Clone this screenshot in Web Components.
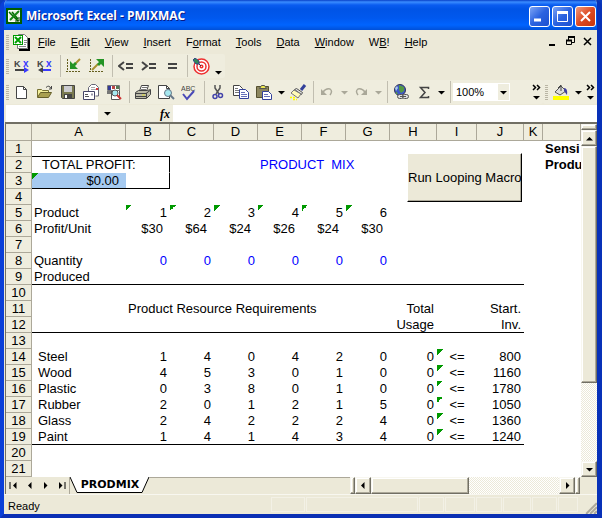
<!DOCTYPE html>
<html lang="en">
<head>
<meta charset="utf-8">
<title>Microsoft Excel - PMIXMAC</title>
<style>
  html, body { height: 100%; margin: 0; }
  body {
    --face: #ece9d8;
    --bar: #efedde;
    --shadow: #aca899;
    --dark: #716f64;
    --ui: "Liberation Sans", Arial, sans-serif;
    background: #0a3bbd;
    font: 11px/16px var(--ui);
    color: #000;
  }
</style>
</head>
<body>
<excel-window>
  <title-bar slot="title">Microsoft Excel - PMIXMAC</title-bar>
  <menu-bar slot="bars"></menu-bar>
  <tool-bar slot="bars" items="kx-right kx-left | axis-in axis-out | le ge eq | target drop-low"></tool-bar>
  <tool-strip slot="bars">
    <tool-bar grow items="new open save mail search | print preview spell | cut copy paste drop brush | undo drop-off redo drop-off | globe sigma drop |">
      <zoom-box></zoom-box>
    </tool-bar>
    <tool-bar items="bucket drop"></tool-bar>
  </tool-strip>
  <formula-bar slot="bars"></formula-bar>
  <work-sheet>
    <macro-button>Run Looping Macro</macro-button>
  </work-sheet>
  <sheet-tabs slot="foot">PRODMIX</sheet-tabs>
  <status-bar slot="foot">Ready</status-bar>
</excel-window>

<script>
const KX = '<g font-family="Liberation Sans" font-weight="bold"><text x="0" y="9" font-size="9" fill="#444">K</text><text x="9" y="9" font-size="10" fill="#3a3aff">x</text></g>';

const ICONS = {
  "excel": '<rect width="16" height="16" fill="#005c00"/><path d="M2.5 2.5h11v11h-11z" fill="#e9f3e0" stroke="#fff"/><path d="M3 4l9 9M6 4l6 7" stroke="#006c00" stroke-width="1.500"/><path d="M13 3L4 12" stroke="#168516" stroke-width="2"/><path d="M9 13h4V9" fill="none" stroke="#003c00"/>',
  "book": '<path d="M6 16h10V4" fill="none" stroke="#000" stroke-width="2"/><path d="M4.500 2.500l1-2h6l3 3v11h-10z" fill="#fff" stroke="#777"/><path d="M11 6.500h3M11 8.500h3M6 12.500h7M11 10.500h2" stroke="#888"/><rect x=".5" y="1.500" width="9" height="9" fill="#fff" stroke="#009900"/><path d="M2 3l6 6M8 3L2 9" stroke="#00a000" stroke-width="2"/>',
  "kx-right": KX + '<path d="M1 12h9" stroke="#444" stroke-width="2"/><path d="M10 9v6l5-3z" fill="#3a3aff"/>',
  "kx-left": KX + '<path d="M6 12h8" stroke="#3a3aff" stroke-width="2"/><path d="M6 9v6l-5-3z" fill="#444"/>',
  "axis-in": '<path d="M1.500 1v13M0 13.500h15" stroke="#665f20" stroke-dasharray="2 1"/><path d="M14 1L8 7" stroke="#a89030" stroke-width="2"/><path d="M4 3v8h8l-3-3 2-2-2-2-2 2z" fill="#249424"/>',
  "axis-out": '<path d="M1.500 1v13M0 13.500h15" stroke="#665f20" stroke-dasharray="2 1"/><path d="M3 12L9 6" stroke="#a89030" stroke-width="2"/><path d="M7 1h8v8l-3-3-2 2-2-2 2-2z" fill="#249424"/>',
  "le": '<path d="M6 4L1 8l5 4M8 6h7M8 10h7" fill="none" stroke="#444" stroke-width="2"/>',
  "ge": '<path d="M1 4l5 4-5 4M8 6h7M8 10h7" fill="none" stroke="#444" stroke-width="2"/>',
  "eq": '<path d="M4 6h9M4 10h9" stroke="#444" stroke-width="2"/>',
  "target": '<g fill="#fff" stroke="#ee3030" stroke-width="1.500"><circle cx="8.500" cy="8.500" r="7.500"/><circle cx="8.500" cy="8.500" r="4.500"/><circle cx="8.500" cy="8.500" r="1.300"/></g><path d="M1 1l7 7" stroke="#334"/><path d="M0 2l2-2 4 3v3H3z" fill="#338855" stroke="#334488"/>',
  "new": '<path d="M2.500 2.500h7l3 3v9h-10z" fill="#fff" stroke="#444"/><path d="M9.500 2.500v3h3" fill="none" stroke="#444"/>',
  "open": '<path d="M.5 13V5.500h4l1 1h6V9" fill="#f3ef9a" stroke="#777133"/><path d="M.5 13.500l3-5h11l-3 5z" fill="#aaa050" stroke="#66602a"/><path d="M9 3.500q3-3 5 1M14.500 2v3H12" fill="none" stroke="#444"/>',
  "save": '<path d="M1.500 1.500h13v13h-12l-1-1z" fill="#7a7a50" stroke="#444"/><rect x="4" y="2" width="8" height="6" fill="#ccccd0"/><path d="M4 10h8v5H4z" fill="#444"/><path d="M5 11h2v3H5z" fill="#fff"/>',
  "mail": '<path d="M5.500 8V3.500l3-3h4l3 3V12h-3" fill="#fff" stroke="#667"/><path d="M8 3.500h4M8 5.500h5" stroke="#aaa"/><rect x="13" y="4" width="2" height="2" fill="#d33"/><path d="M.5 7.500h11v8H.5z" fill="#fff" stroke="#446"/><path d="M2 10.500h3M2 12.500h4" stroke="#555"/><path d="M8 9.500h2v2H8z" fill="#99a"/>',
  "search": '<path d="M5.500 4.500h8v11h-8z" fill="#fff" stroke="#555"/><path d="M1.500 1.500h12v5h-12z" fill="#fff" stroke="#777"/><path d="M2 2h3v4H2z" fill="#333a99"/><path d="M6 2h3v3H6z" fill="#b44"/><path d="M1 7h4v3H1z" fill="#777"/><path d="M10 2h3v3h-3z" fill="#557755"/><circle cx="9" cy="9" r="3" fill="#a6e8f0" stroke="#555"/><path d="M11 11l4 4" stroke="#c33" stroke-width="2"/>',
  "print": '<path d="M4.500 7l2-5.500h7L11.500 7z" fill="#fff" stroke="#444"/><path d="M7 3.500h5M6 5.500h5" stroke="#777"/><path d="M.5 8.500l3-2h9l3-1v5l-4 4H.5z" fill="#bbb9a8" stroke="#444"/><path d="M1 9.500h10l4-3M1 12.500h10M11.500 9v5" fill="none" stroke="#444"/><path d="M7 11h3" stroke="#dd3"/>',
  "preview": '<path d="M.5 1.500h8l3 3v10H.5z" fill="#fff" stroke="#444"/><path d="M8.500 1.500v3h3" fill="none" stroke="#444"/><circle cx="10" cy="9" r="3.500" fill="#a6e8f0" stroke="#667788"/><path d="M12 11l4 4" stroke="#667788" stroke-width="2"/>',
  "spell": '<text x="0" y="7" font-family="Liberation Sans" font-size="7" fill="#444">ABC</text><path d="M2 10l4 5 7-8" fill="none" stroke="#4a4ab8" stroke-width="2"/>',
  "cut": '<path d="M5 1v3l4 6M10 1v3l-4 6" fill="none" stroke="#555" stroke-width="1.500"/><circle cx="5" cy="12.500" r="2" fill="none" stroke="#44a" stroke-width="1.500"/><circle cx="10.500" cy="11.500" r="2" fill="none" stroke="#44a" stroke-width="1.500"/>',
  "copy": '<path d="M.5 1.500h6l3 3v7h-9z" fill="#fff" stroke="#444"/><path d="M2 4.500h3M2 6.500h5M2 8.500h5" stroke="#777"/><path d="M6.500 5.500h6l3 3v6h-9z" fill="#fff" stroke="#33419a"/><path d="M8 8.500h4M8 10.500h6M8 12.500h6" stroke="#6670b8"/>',
  "paste": '<path d="M.5 2.500h12v11H.5z" fill="#8d875f" stroke="#555030"/><path d="M3.500 4.500l2-3h3l2 3z" fill="#eeea50" stroke="#555"/><path d="M6.500 7.500h6l3 3v5h-9z" fill="#fff" stroke="#33419a"/><path d="M8 10.500h4M8 12.500h6" stroke="#6670b8"/>',
  "brush": '<path d="M11 6l4-5" stroke="#33419a" stroke-width="3"/><path d="M6.500 4.500l6 4-1 2-7-5z" fill="#ddd" stroke="#555"/><path d="M4 6L1 9l7 5 3-4z" fill="#fffbb8" stroke="#777"/><path d="M0 13.500h5M3 15.500h4" stroke="#ff0" stroke-width="1.500" stroke-dasharray="2 1"/>',
  "undo": '<path d="M4 8q3-4 7-3 3 2 0 6" fill="none" stroke="#aaa899" stroke-width="1.500"/><path d="M2 5v6h6z" fill="#aaa899"/>',
  "redo": '<path d="M12 8Q9 4 5 5q-3 2 0 6" fill="none" stroke="#aaa899" stroke-width="1.500"/><path d="M14 5v6H8z" fill="#aaa899"/>',
  "globe": '<circle cx="7" cy="6" r="5.500" fill="#3e58c8" stroke="#335"/><path d="M6 1l5 2v4L8 9 6 6zM3 7l2 3H3z" fill="#559944"/><path d="M2 4l2-2 1 2-2 3z" fill="#aaccee"/><g fill="#ddd" stroke="#555"><rect x="4.500" y="10.500" width="6" height="4" rx="2"/><rect x="9.500" y="10.500" width="6" height="4" rx="2"/></g><path d="M7 12.500h6" stroke="#555"/>',
  "sigma": '<path d="M12.500 5V3.500h-8L9 8.500l-4.500 5h8V12" fill="none" stroke="#444" stroke-width="1.500"/>',
  "bucket": '<path d="M2 8l6-6 5 5-6 4z" fill="#ddd" stroke="#555"/><path d="M8 7V1L5 4" fill="none" stroke="#444"/><path d="M11 4q4 0 3 7l-3-4z" fill="#4040a0"/><path d="M0 12h16v4H0z" fill="#ff0"/>',
};

const MENUS = ["_File", "_Edit", "_View", "_Insert", "F_ormat", "_Tools", "_Data", "_Window", "W_B!", "_Help"];

/** Builds an inline 17px icon. */
function icon(name) {
  return `<svg width="17" height="17" viewBox="0 0 17 17" aria-hidden="true">${ICONS[name]}</svg>`;
}

/** Small filled arrow used by drop-downs and scroll buttons. */
function arrow(dir, color = "#000") {
  const shapes = {
    down: "M0 2h7L3.500 5.500z",
    up: "M0 5.500h7L3.500 2z",
    left: "M5.500 0v7L2 3.500z",
    right: "M2 0v7l3.500-3.500z",
  };
  return `<svg width="7" height="7" viewBox="0 0 7 7" aria-hidden="true"><path d="${shapes[dir]}" fill="${color}"/></svg>`;
}

const RESET = `
  *, *::before { box-sizing: border-box; }
  button { margin: 0; padding: 0; border: 0; background: none; font: inherit; color: inherit; }
  svg { display: block; flex: none; }
`;

class BaseElement extends HTMLElement {
  constructor() {
    super();
    this.attachShadow({ mode: "open" });
  }

  connectedCallback() {
    this.shadowRoot.innerHTML = `<style>${RESET}${this.styles()}</style>${this.markup()}`;
  }
}

class ExcelWindow extends BaseElement {
  styles() {
    return `
      :host {
        display: flex; flex-direction: column; height: 100%; box-sizing: border-box;
        border: solid; border-width: 0 5px 4px 4px;
        border-color: #0a4be0 #0831b8 #0a2fb4 #0a3fd8;
        border-radius: 7px 7px 0 0; overflow: hidden; background: var(--face);
      }
      main { flex: 1; min-height: 0; display: flex; }
    `;
  }

  markup() {
    return `<slot name="title"></slot><slot name="bars"></slot><main><slot></slot></main><slot name="foot"></slot>`;
  }
}

class TitleBar extends BaseElement {
  styles() {
    return `
      :host {
        display: flex; align-items: center; gap: 3px; height: 30px; flex: none;
        box-sizing: border-box; padding: 2px 1px 0 2px;
        background: linear-gradient(#0840c8 0, #3a8cff 2px, #0a5cf0 5px, #0054e6 9px, #0058ee 18px, #0064ff 25px, #0050d8 30px);
        color: #fff; font: bold 12px/20px "Open Sans", sans-serif; text-shadow: 1px 1px #0a1883;
      }
      h1 { flex: 1; margin: 0; font: inherit; white-space: nowrap; }
      div { display: flex; gap: 2px; }
      button {
        width: 21px; height: 21px; border: 1px solid #fff; border-radius: 3px;
        background: linear-gradient(135deg, #7da4f5, #2a62e0 50%, #1c50d0);
      }
      .close { background: linear-gradient(135deg, #f0997c, #dd4a22 50%, #c8350c); }
      button svg { margin: auto; }
    `;
  }

  markup() {
    return `
      ${icon("excel")}
      <h1><slot></slot></h1>
      <div>
        <button aria-label="Minimize"><svg width="13" height="13"><path d="M1 10h7" stroke="#fff" stroke-width="3"/></svg></button>
        <button aria-label="Maximize"><svg width="13" height="13"><path d="M1.500 2h10v9.500h-10z" fill="none" stroke="#fff"/><path d="M1 2.500h11" stroke="#fff" stroke-width="3"/></svg></button>
        <button class="close" aria-label="Close"><svg width="13" height="13"><path d="M2 2l9 9M11 2l-9 9" stroke="#fff" stroke-width="2"/></svg></button>
      </div>
    `;
  }
}

const GRIP = `
  .grip {
    width: 3px; height: 15px; flex: none; margin: 0 1px;
    background: repeating-linear-gradient(#b9b5a4 0 1px, transparent 1px 2px);
  }
`;

class MenuBar extends BaseElement {
  styles() {
    return `
      ${GRIP}
      :host { display: flex; align-items: center; height: 24px; flex: none; padding: 0 4px 0 1px; }
      nav { flex: 1; display: flex; }
      nav button { padding: 0 7px 0 8px; white-space: nowrap; }
      .book { margin-left: 3px; }
      .mdi { display: flex; gap: 6px; padding-bottom: 2px; }
    `;
  }

  markup() {
    const items = MENUS.map((name) => `<button>${name.replace(/_(.)/, "<u>$1</u>")}</button>`);
    return `
      <span class="grip"></span>
      <span class="book">${icon("book")}</span>
      <nav>${items.join("")}</nav>
      <div class="mdi">
        <button aria-label="Minimize window"><svg width="11" height="11"><path d="M1 9h6" stroke="#000" stroke-width="2"/></svg></button>
        <button aria-label="Restore window"><svg width="11" height="11"><path d="M3.500 4V1.500h6v5H7M1.500 4.500h5v4h-5z" fill="none" stroke="#000"/><path d="M3 1h7M1 4.500h6" stroke="#000" stroke-width="2"/></svg></button>
        <button aria-label="Close window"><svg width="11" height="11"><path d="M2 2l7 7M9 2l-7 7" stroke="#000" stroke-width="1.500"/></svg></button>
      </div>
    `;
  }
}

class ToolStrip extends BaseElement {
  styles() {
    return `:host { display: flex; flex: none; margin-top: 2px; } `;
  }

  markup() {
    return `<slot></slot>`;
  }
}

class ToolBar extends BaseElement {
  styles() {
    return `
      ${GRIP}
      :host {
        display: flex; align-items: center; align-self: flex-start; height: 24px; flex: none;
        box-sizing: border-box; padding: 0 1px; background: var(--bar); border-radius: 2px;
      }
      :host([grow]) { flex: 1; }
      .grip { margin-right: 2px; }
      button { display: flex; align-items: center; justify-content: center; width: 23px; height: 22px; }
      .drop { width: 11px; }
      .low { padding-top: 12px; }
      .sep { width: 6px; flex: none; height: 22px; display: flex; justify-content: center; }
      .sep::before { content: ""; width: 1px; background: #c1beb0; }
      .more { flex-direction: column; width: 12px; gap: 3px; margin-left: auto; }
    `;
  }

  markup() {
    const items = this.getAttribute("items").split(" ").map((name) => this.getItem(name));
    const more = this.parentElement.localName === "tool-strip"
      ? `<button class="more" aria-label="Toolbar options">
          <svg width="9" height="7"><path d="M1 1l2.500 2.500L1 6M5 1l2.500 2.500L5 6" fill="none" stroke="#000" stroke-width="1.500"/></svg>${arrow("down")}
        </button>`
      : "";
    return `<span class="grip"></span>${items.join("")}<slot></slot>${more}`;
  }

  getItem(name) {
    if (name === "|") return `<span class="sep"></span>`;
    if (name === "drop-low") return `<button class="drop low" aria-label="More">${arrow("down")}</button>`;
    if (name === "drop-off") return `<button class="drop" disabled aria-label="History">${arrow("down", "#aaa899")}</button>`;
    if (name === "drop") return `<button class="drop" aria-label="More">${arrow("down")}</button>`;
    return `<button aria-label="${name}">${icon(name)}</button>`;
  }
}

class ZoomBox extends BaseElement {
  styles() {
    return `
      :host { display: flex; position: relative; width: 57px; height: 18px; background: #fff; }
      select {
        width: 100%; padding: 0 3px; border: 0; appearance: none; background: none;
        font: 11px/18px var(--ui); color: #000;
      }
      span {
        position: absolute; inset: 1px 1px 1px auto; width: 11px; background: var(--bar);
        display: flex; align-items: center; justify-content: center; pointer-events: none;
      }
    `;
  }

  markup() {
    return `<select aria-label="Zoom"><option>100%</option></select><span>${arrow("down")}</span>`;
  }
}

class FormulaBar extends BaseElement {
  styles() {
    return `
      :host { display: flex; align-items: stretch; height: 17px; flex: none; margin-top: 1px; padding-left: 2px; }
      input { min-width: 0; border: 0; padding: 0 3px; background: #fff; font: 11px/16px var(--ui); outline: 0; }
      .name { width: 92px; }
      .formula { flex: 1; }
      .tools { display: flex; align-items: center; justify-content: space-between; width: 75px; padding: 0 3px 0 6px; background: var(--bar); }
      i { font: italic bold 12px/16px "Liberation Serif", serif; }
    `;
  }

  markup() {
    return `
      <input class="name" aria-label="Name box">
      <div class="tools">
        <button aria-label="Names">${arrow("down")}</button>
        <button aria-label="Insert function"><i>fx</i></button>
      </div>
      <input class="formula" aria-label="Formula">
    `;
  }
}

class ScrollBar extends BaseElement {
  styles() {
    return `
      :host { display: flex; flex: none; width: 16px; }
      :host([vertical]) { flex-direction: column; }
      :host([horizontal]) { width: auto; height: 17px; }
      .split, button, .thumb {
        background: var(--face); border: 1px solid; border-color: #f8f7f0 var(--dark) var(--dark) #f8f7f0;
        box-shadow: inset -1px -1px var(--shadow), inset 1px 1px #fff;
      }
      .split { flex: none; height: 6px; }
      :host([horizontal]) .split { height: auto; width: 5px; }
      button { display: flex; align-items: center; justify-content: center; flex: none; width: 16px; height: 16px; }
      :host([horizontal]) button { height: 17px; }
      .thumb { flex: 237; }
      .track {
        flex: 79;
        background: repeating-conic-gradient(#fff 0 25%, var(--face) 0 50%) 0 0 / 2px 2px;
      }
      :host([horizontal]) .thumb { flex: 97; }
      :host([horizontal]) .track { flex: 90; }
    `;
  }

  markup() {
    const dirs = this.hasAttribute("vertical") ? ["up", "down"] : ["left", "right"];
    const tail = this.hasAttribute("vertical") ? "" : `<div class="split"></div>`;
    return `
      <div class="split"></div>
      <button aria-label="Scroll ${dirs[0]}">${arrow(dirs[0])}</button>
      <div class="thumb"></div>
      <div class="track"></div>
      <button aria-label="Scroll ${dirs[1]}">${arrow(dirs[1])}</button>${tail}
    `;
  }
}

const COLUMNS = { A: 94, B: 44, C: 44, D: 44, E: 44, F: 44, G: 44, H: 47, I: 40, J: 47, K: 19, L: 0 };
const ROW_COUNT = 21;

// cell address -> [text, class names]
const CELLS = {
  A1: ["", "under"],
  B1: ["", "under"],
  L1: ["Sensi", "bold"],
  A2: ["TOTAL PROFIT:", "wide-indent"],
  B2: ["", "side"],
  E2: ["PRODUCT  MIX", "blue"],
  L2: ["Produ", "bold"],
  A3: ["$0.00", "money selected flag under"],
  B3: ["", "side under"],
  A5: ["Product"],
  A6: ["Profit/Unit"],
  A8: ["Quantity"],
  A9: ["Produced"],
  B11: ["Product Resource Requirements"],
  H11: ["Total", "num"],
  J11: ["Start.", "num"],
  H12: ["Usage", "num"],
  J12: ["Inv.", "num"],
};

const RESOURCES = [
  ["Steel", 1, 4, 0, 4, 2, 0, 0, "<=", 800],
  ["Wood", 4, 5, 3, 0, 1, 0, 0, "<=", 1160],
  ["Plastic", 0, 3, 8, 0, 1, 0, 0, "<=", 1780],
  ["Rubber", 2, 0, 1, 2, 1, 5, 0, "<=", 1050],
  ["Glass", 2, 4, 2, 2, 2, 4, 0, "<=", 1360],
  ["Paint", 1, 4, 1, 4, 3, 4, 0, "<=", 1240],
];

["$30", "$64", "$24", "$26", "$24", "$30"].forEach((profit, i) => {
  const col = "BCDEFG"[i];
  CELLS[`${col}5`] = [i + 1, "num flag"];
  CELLS[`${col}6`] = [profit, "num unit"];
  CELLS[`${col}8`] = [0, "num blue"];
});

RESOURCES.forEach((values, i) => {
  values.forEach((value, j) => {
    const col = "ABCDEFGHIJ"[j];
    const kind = col === "A" ? "indent" : col === "I" ? "mid flag" : "num";
    CELLS[`${col}${14 + i}`] = [value, kind];
  });
});

class WorkSheet extends BaseElement {
  styles() {
    return `
      :host {
        display: flex; flex: 1; min-width: 0; margin-left: 1px;
        border: solid var(--dark); border-width: 2px 0 0 1px; background: #fff;
        font: 13px/15px "Liberation Sans", Arial, sans-serif;
      }
      .grid { flex: 1; min-width: 0; overflow: hidden; position: relative; }
      table { width: 100%; border-collapse: separate; border-spacing: 0; table-layout: fixed; }
      tr { height: 16px; }
      th {
        height: 16px; padding: 0; font-weight: normal; background: var(--bar);
        border: solid var(--shadow); border-width: 0 1px 1px 0; line-height: 15px;
      }
      thead th { height: 17px; line-height: 16px; }
      td { height: 16px; padding: 0 2px; border-bottom: 1px solid transparent; white-space: pre; }
      .under { border-bottom-color: #000; }
      .side { border-right: 1px solid #000; }
      .num { text-align: right; padding-right: 3px; }
      .unit { padding-right: 7px; }
      .money { text-align: right; padding-right: 7px; }
      .mid { text-align: center; }
      .indent { padding-left: 6px; }
      .wide-indent { padding-left: 10px; }
      .blue { color: #00f; }
      .bold { font-weight: bold; }
      .flag {
        background: linear-gradient(to bottom right, #090 50%, transparent 50%) 0 0 / 6px 6px no-repeat;
      }
      .selected { background-color: #a6caf0; }
      ::slotted(macro-button) { position: absolute; left: 401px; top: 29px; }
    `;
  }

  markup() {
    const letters = Object.keys(COLUMNS);
    const cols = letters.map((col) => `<col${COLUMNS[col] ? ` style="width: ${COLUMNS[col]}px"` : ""}>`);
    const heads = letters.map((col) => `<th scope="col">${col === "L" ? "" : col}</th>`);
    const rows = Array.from({ length: ROW_COUNT }, (_, i) => this.getRow(i + 1, letters));
    return `
      <div class="grid">
        <table>
          <colgroup><col style="width: 26px">${cols.join("")}</colgroup>
          <thead><tr><th></th>${heads.join("")}</tr></thead>
          <tbody>${rows.join("")}</tbody>
        </table>
        <slot></slot>
      </div>
      <scroll-bar vertical></scroll-bar>
    `;
  }

  getRow(row, letters) {
    const ruled = [9, 12, 19].includes(row);
    const cells = letters.map((col) => {
      const [text, kind = ""] = CELLS[`${col}${row}`] || [""];
      const rule = ruled && col < "K" ? " under" : "";
      return `<td class="${kind}${rule}">${String(text).replace("<", "&lt;")}</td>`;
    });
    return `<tr><th scope="row">${row}</th>${cells.join("")}</tr>`;
  }
}

class MacroButton extends BaseElement {
  styles() {
    return `
      :host { display: block; }
      button {
        display: block; height: 49px; padding: 0; background: var(--face); white-space: nowrap;
        border: 1px solid; border-color: #fff #000 #000 #fff; box-shadow: inset -1px -1px var(--shadow);
      }
    `;
  }

  markup() {
    return `<button><slot></slot></button>`;
  }
}

class SheetTabs extends BaseElement {
  styles() {
    return `
      :host { display: flex; height: 17px; flex: none; margin-left: 1px; border-left: 1px solid var(--dark); }
      .nav { display: flex; width: 64px; border-right: 1px solid var(--shadow); }
      .nav button { display: flex; flex: 1; align-items: center; justify-content: center; }
      .tab { position: relative; width: 80px; font: bold 11px/16px "DejaVu Sans", sans-serif; }
      .tab svg { position: absolute; inset: 0; }
      .tab button { position: relative; width: 100%; text-align: center; }
      .rest { flex: 1; border-top: 1px solid var(--shadow); }
      scroll-bar { flex: 0 0 39%; }
      .corner { width: 17px; }
    `;
  }

  markup() {
    const bar = `<svg width="2" height="7"><path d="M1 0v7" stroke="#000"/></svg>`;
    return `
      <div class="nav">
        <button aria-label="First sheet">${bar}${arrow("left")}</button>
        <button aria-label="Previous sheet">${arrow("left")}</button>
        <button aria-label="Next sheet">${arrow("right")}</button>
        <button aria-label="Last sheet">${arrow("right")}${bar}</button>
      </div>
      <div class="tab">
        <svg width="80" height="17"><path d="M0 0l7 15.500h65L79 0" fill="#fff" stroke="#000"/></svg>
        <button><slot></slot></button>
      </div>
      <div class="rest"></div>
      <scroll-bar horizontal></scroll-bar>
      <div class="corner"></div>
    `;
  }
}

class StatusBar extends BaseElement {
  styles() {
    return `
      :host {
        display: flex; align-items: center; gap: 1px; height: 20px; flex: none; box-sizing: border-box;
        border-top: 1px solid #f8f7f0; padding-left: 4px;
      }
      .text { flex: 1; padding-top: 2px; }
      .pane { height: 15px; border: 1px solid #f3f1e6; }
    `;
  }

  markup() {
    const panes = [34, 112, 25, 30, 26, 28, 25, 20].map((width) => `<span class="pane" style="width: ${width}px"></span>`);
    return `
      <span class="text" role="status"><slot></slot></span>${panes.join("")}
      <svg width="18" height="18"><path d="M6 18L18 6M10 18l8-8M14 18l4-4" stroke="#fff"/><path d="M7 18L18 7M11 18l7-7M15 18l3-3" stroke="#aca899" stroke-width="2"/></svg>
    `;
  }
}

customElements.define("scroll-bar", ScrollBar);
customElements.define("zoom-box", ZoomBox);
customElements.define("title-bar", TitleBar);
customElements.define("menu-bar", MenuBar);
customElements.define("tool-bar", ToolBar);
customElements.define("tool-strip", ToolStrip);
customElements.define("formula-bar", FormulaBar);
customElements.define("macro-button", MacroButton);
customElements.define("work-sheet", WorkSheet);
customElements.define("sheet-tabs", SheetTabs);
customElements.define("status-bar", StatusBar);
customElements.define("excel-window", ExcelWindow);
</script>
</body>
</html>
